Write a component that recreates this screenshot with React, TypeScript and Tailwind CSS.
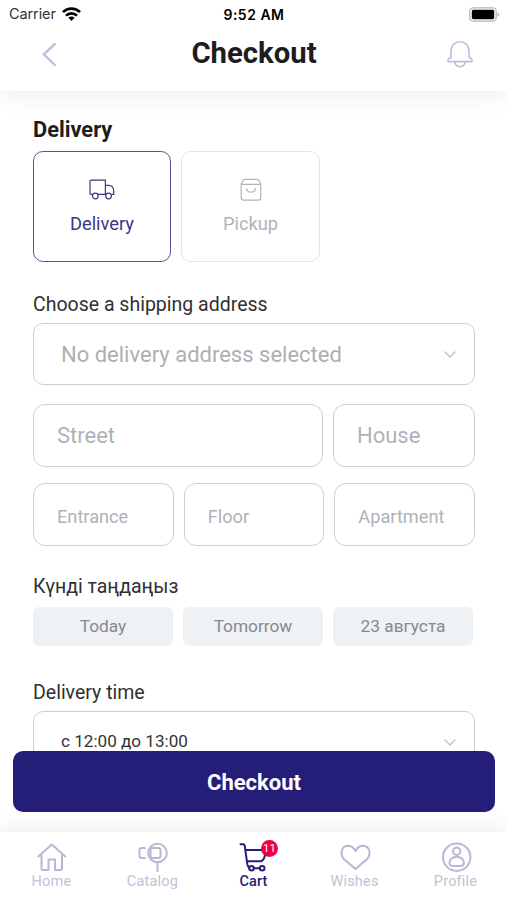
import { useState, type ReactNode } from "react";

interface TabProps {
  label: string;
  active?: boolean;
  children: ReactNode;
}

interface FieldProps {
  placeholder: string;
  className: string;
}

interface SelectFieldProps {
  label: string;
  className: string;
}

const days = ["Today", "Tomorrow", "23 августа"];

function StatusBar() {
  return (
    <div className="flex h-7 items-center justify-between pr-[7px] pl-[9px] text-black">
      <div className="flex w-24 items-center gap-[6px] font-[Inter] text-[14.5px] tracking-[-0.1px] text-[#333]">
        Carrier
        <svg width="19" height="15" viewBox="0 0 19 15" fill="none" stroke="#000" strokeWidth="2.7">
          <path d="M1 5.1a12.1 12.1 0 0 1 17 0" />
          <path d="M4 8.6a7.8 7.8 0 0 1 11 0" />
          <path d="M9.5 14 6.4 10.8a4.4 4.4 0 0 1 6.2 0Z" fill="#000" stroke="none" />
        </svg>
      </div>
      <span className="pr-px font-[Inter] text-[14px] font-semibold tracking-[0.5px]">9:52 AM</span>
      <div className="flex w-24 items-center justify-end">
        <svg width="31" height="15" viewBox="0 0 31 15" fill="none">
          <rect x="0.8" y="0.8" width="26.4" height="13.4" rx="3.6" stroke="#b5b5b5" strokeWidth="1.3" />
          <rect x="2.8" y="2.8" width="22.4" height="9.4" rx="1.6" fill="#000" />
          <path d="M28.6 5.2c2.2.7 2.2 3.9 0 4.6Z" fill="#b5b5b5" />
        </svg>
      </div>
    </div>
  );
}

function Header() {
  return (
    <header className="h-[91px] shrink-0 bg-white shadow-[0_4px_24px_rgba(0,0,0,0.08)]">
      <StatusBar />
      <div className="flex h-[52px] items-center justify-between pr-[33px] pl-[42px]">
        <button>
          <svg width="15" height="24" viewBox="0 0 15 24" fill="none" stroke="#c2bfdc" strokeWidth="2.4" strokeLinecap="round">
            <path d="M12.8 2 1.8 12.3 12.8 23" />
          </svg>
        </button>
        <h1 className="pr-[1px] pl-[6px] text-[29.3px] leading-none font-bold text-[#1d1d1d]">Checkout</h1>
        <button>
          <svg width="28" height="28" viewBox="0 0 28 28" fill="none" stroke="#bdbbdc" strokeWidth="1.6" strokeLinejoin="round">
            <path d="M5 18.5V10.8C5 5.5 9 1.7 14 1.7s9 3.8 9 9.1v5.7c0 1 .6 1.6 1.8 2.1 1 .4 1.2 1 1.2 2v1H2v-1c0-1 .2-1.6 1.2-2 1.2-.5 1.8-1.1 1.8-2.1" />
            <path d="M8.7 21.7c.4 3.3 2.4 5 5.3 5s4.9-1.7 5.3-5" />
          </svg>
        </button>
      </div>
    </header>
  );
}

function SelectField({ label, className }: SelectFieldProps) {
  return (
    <button
      className={`flex h-[62px] w-full items-center justify-between rounded-[10px] border border-[#cccfd1] pr-[17px] pl-[27px] ${className}`}
    >
      {label}
      <svg width="14" height="9" viewBox="0 0 14 9" fill="none" stroke="#c3c0d8" strokeWidth="1.5" strokeLinecap="round">
        <path d="m2 2 5 5 5-5" />
      </svg>
    </button>
  );
}

function Field({ placeholder, className }: FieldProps) {
  return (
    <input
      className={`h-[63px] min-w-0 rounded-[12px] border border-[#cccfd1] px-[23px] placeholder:text-[#aeb2b8] placeholder:opacity-100 ${className}`}
      placeholder={placeholder}
    />
  );
}

function Tab({ label, active, children }: TabProps) {
  return (
    <button
      className={`flex w-[101px] flex-col items-center text-[14.5px] leading-[17px] ${
        active ? "text-[#251e78]" : "text-[#b9b7d4]"
      }`}
    >
      <svg width="34" height="32" viewBox="0 0 34 32" fill="none" stroke="currentColor" strokeWidth="2" strokeLinecap="round" strokeLinejoin="round">
        {children}
      </svg>
      <span className={active ? "font-medium tracking-[0.1px]" : "tracking-[0.2px] text-[#c3c1d5]"}>{label}</span>
    </button>
  );
}

function App() {
  const [method, setMethod] = useState<string>("delivery");

  return (
    <div className="relative flex h-[900px] w-[507px] flex-col overflow-hidden bg-white font-[Roboto,sans-serif] text-[#303030]">
      <Header />

      <main className="min-h-0 flex-1 overflow-hidden pt-[26px] pr-8 pl-[33px]">
        <h2 className="text-[21.8px] leading-[26px] font-bold text-[#1d1d1d]">Delivery</h2>
        {/* Delivery method */}
        <div className="mt-2 flex gap-[10px]">
          <button
            className={`flex h-[111px] w-[138px] flex-col items-center rounded-[10px] border-[1.5px] pt-[26px] text-[18.3px] ${
              method === "delivery" ? "border-[#5a5499] text-[#3d3686]" : "border-[#e3e5e7] text-[#b1b3ba]"
            }`}
            onClick={() => setMethod("delivery")}
          >
            <svg width="26" height="24" viewBox="0 0 26 24" fill="none" stroke="currentColor" strokeWidth="1.2">
              <path d="M3.5 16.3H2.1c-.8 0-1.1-.4-1.1-1.1V3.3c0-.7.4-1.1 1.1-1.1h14.3v14.1H9M16.4 7.3h3.3c2.9 0 5 2.5 5 5.5v3.5h-2M16.4 16.3h.4" />
              <circle cx="6.3" cy="18" r="2.8" />
              <circle cx="19.6" cy="18" r="2.8" />
            </svg>
            <span className="mt-[10px] leading-6">Delivery</span>
          </button>
          <button
            className={`flex h-[111px] w-[139px] flex-col items-center rounded-[10px] border-[1.5px] pt-[26px] text-[18.3px] ${
              method === "pickup" ? "border-[#5a5499] text-[#3d3686]" : "border-[#e3e5e7] text-[#b1b3ba]"
            }`}
            onClick={() => setMethod("pickup")}
          >
            <svg width="22" height="24" viewBox="0 0 22 24" fill="none" stroke="currentColor" strokeWidth="1.2" strokeLinejoin="round">
              <path d="M1.2 6.3 3 2.5c.5-.9 1-1.2 2-1.2h12c1 0 1.5.3 2 1.2l1.8 3.8v13.4c0 1.6-.8 2.4-2.4 2.4H3.6c-1.6 0-2.4-.8-2.4-2.4ZM1.2 6.3h19.6M6.5 10.3c.2 2.3 2 3.9 4.5 3.9s4.3-1.6 4.5-3.9" />
            </svg>
            <span className="mt-[10px] leading-6">Pickup</span>
          </button>
        </div>

        {/* Address */}
        <h3 className="mt-[31px] text-[19.5px] leading-6">Choose a shipping address</h3>
        <SelectField label="No delivery address selected" className="mt-[6px] text-[22px] text-[#adafb2]" />
        <div className="mt-[19px] flex gap-[10px] text-[22px]">
          <Field placeholder="Street" className="w-[290px]" />
          <Field placeholder="House" className="w-[142px]" />
        </div>
        <div className="mt-4 grid grid-cols-3 gap-[10px] text-[18.2px]">
          <Field placeholder="Entrance" className="w-full pt-[4px]" />
          <Field placeholder="Floor" className="w-full pt-[4px]" />
          <Field placeholder="Apartment" className="w-full pt-[4px]" />
        </div>

        {/* Date and time */}
        <h3 className="mt-[29px] text-[19.5px] leading-6">Күнді таңдаңыз</h3>
        <div className="mt-[8px] flex gap-[10px]">
          {days.map((day) => (
            <button key={day} className="h-[39px] w-[140px] rounded-[6px] bg-[#eff2f5] pt-px text-[17.3px] text-[#858990]">
              {day}
            </button>
          ))}
        </div>
        <h3 className="mt-[35px] text-[19.5px] leading-6">Delivery time</h3>
        <SelectField label="с 12:00 до 13:00" className="mt-[6px] text-[17.1px] text-[#333]" />
      </main>

      <button className="absolute top-[751px] left-[13px] h-[61px] w-[482px] rounded-[10px] bg-[#251e78] pt-px text-[22px] font-bold text-white">
        Checkout
      </button>

      <nav className="flex h-[68px] shrink-0 items-start justify-center bg-white pt-[9px] shadow-[0_-3px_24px_rgba(0,0,0,0.08)]">
        <Tab label="Home">
          <path d="M3.3 15.5 16.8 3.5l13.5 12M6.5 14.5v13c0 1 .5 1.5 1.5 1.5h5.5V18.5H20V29h5.5c1 0 1.5-.5 1.500-1.500v-13" />
        </Tab>
        <Tab label="Catalog">
          <circle cx="21.5" cy="12" r="9.3" />
          <path d="M21.5 21.5V30M9 7H5.5c-1.300 0-2 .7-2 2v6c0 1.300.7 2 2 2H9" />
          <rect x="14.5" y="7" width="10" height="10" rx="2.2" />
        </Tab>
        <Tab label="Cart" active>
          <path d="M3.5 3.2H6c1 0 1.500.4 1.700 1.500l2.600 18.500c.3 1.700.8 2.800 2 3.600M8.500 8.900h20.800l-1.600 6.400c-.8 3.400-2.200 5-4.700 5H10" />
          <circle cx="14.5" cy="27.3" r="2.3" />
          <circle cx="25.2" cy="27.3" r="2.3" />
          <path d="M16.8 27.3h6.1" />
        </Tab>
        <Tab label="Wishes">
          <path d="M17.5 28 6.4 18.5C1.5 14 3 5 10 4.8c3.7 0 6 2.2 7.5 5.4C19 7 21.3 4.8 25 4.8c7 .2 8.5 9.2 3.6 13.7Z" />
        </Tab>
        <Tab label="Profile">
          <circle cx="17.7" cy="16.2" r="13.7" />
          <circle cx="17.7" cy="10.3" r="3.7" />
          <path d="M17.7 15.8c-4 0-7.2 2.7-7.2 5.9 0 2.2 1.5 3.3 3.6 3.3h7.2c2.1 0 3.6-1.100 3.6-3.300 0-3.200-3.200-5.900-7.200-5.900Z" />
        </Tab>
      </nav>
      <span className="absolute top-[840px] left-[261px] flex h-[17px] w-[17px] items-center justify-center rounded-full bg-[#ed0040] text-[11.5px] text-white">
        11
      </span>
    </div>
  );
}

export default App;
